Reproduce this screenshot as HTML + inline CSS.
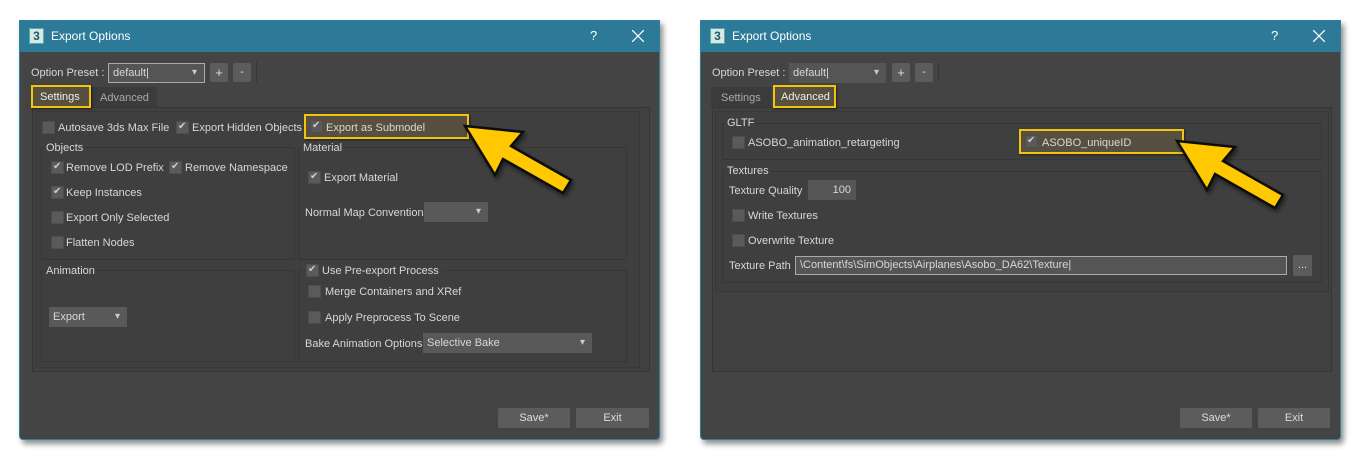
<!DOCTYPE html>
<html><head><meta charset="utf-8"><style>
*{box-sizing:border-box;margin:0;padding:0}
body{width:1362px;height:460px;background:#fff;position:relative;overflow:hidden;font-family:"Liberation Sans",sans-serif;font-size:11px;color:#d8d8d8}
.a{position:absolute}
.win{position:absolute;top:20px;width:641px;height:420px;background:#444;border:1px solid #2f7f9f;border-radius:0 0 4px 4px;box-shadow:3px 4px 6px rgba(0,0,0,.45)}
.tb{position:absolute;left:0;top:0;right:0;height:31px;background:#2c7a98;color:#fff;font-size:12px}
.ic{position:absolute;left:9px;top:7px;width:15px;height:16px;background:#d8e8e4;border:1px solid #5aa;color:#1a5a6a;font-weight:bold;font-size:12px;text-align:center;line-height:14px}
.t{position:absolute;white-space:nowrap;line-height:13px}
.cb{position:absolute;width:13px;height:13px;background:#5a5a5a;border:1px solid #4d4d4d}
.cb.k::after{content:"✔";position:absolute;left:1px;top:-1px;font-size:10px;color:#ccc}
.grp{position:absolute;border:1px solid #363636;border-radius:2px}
.lbl{position:absolute;background:#3f3f3f;padding:0 2px;line-height:12px;white-space:nowrap}
.combo{position:absolute;background:#595959;height:20px;padding-left:4px;line-height:20px}
.combo::after{content:"▾";position:absolute;right:7px;top:0;font-size:10px;color:#ccc}
.btn{position:absolute;background:#5c5c5c;border-radius:2px;text-align:center;line-height:20px;color:#ddd}
.hl{position:absolute;border:2px solid #f1c40f;background:#575040;box-shadow:1px 1px 2px rgba(0,0,0,.5)}
.x{position:absolute;left:612px;top:9px}
</style></head><body>

<!-- LEFT WINDOW -->
<div class="win" style="left:19px">
 <div class="tb"><div class="ic">3</div><div class="t" style="left:31px;top:9px">Export Options</div>
 <div class="t" style="left:570px;top:8px;font-size:13px">?</div>
 <svg class="x" width="12" height="12"><path d="M0 0L12 12M12 0L0 12" stroke="#fff" stroke-width="1.3"/></svg></div>
</div>
<div class="t" style="left:31px;top:67px">Option Preset :</div>
<div class="combo" style="left:108px;top:63px;width:97px;border:1px solid #aaa;background:#555;line-height:18px">default|</div>
<div class="btn" style="left:210px;top:63px;width:18px;height:19px;line-height:19px;font-size:13px">+</div>
<div class="btn" style="left:233px;top:63px;width:18px;height:19px;line-height:19px">-</div>
<div class="a" style="left:256px;top:62px;width:1px;height:20px;background:#363636"></div>
<div class="a" style="left:91px;top:87px;width:66px;height:20px;background:#3b3b3b"></div>
<div class="t" style="left:100px;top:92px;color:#aaa">Advanced</div>
<div class="a" style="left:32px;top:107px;width:618px;height:265px;border:1px solid #363636;background:#404040"></div>
<div class="a" style="left:36px;top:111px;width:604px;height:257px;background:#3f3f3f;border:1px solid #383838"></div>
<div class="hl" style="left:31px;top:85px;width:60px;height:23px"></div>
<div class="t" style="left:40px;top:91px;color:#eee">Settings</div>

<div class="cb" style="left:42px;top:121px"></div><div class="t" style="left:58px;top:122px">Autosave 3ds Max File</div>
<div class="cb k" style="left:176px;top:121px"></div><div class="t" style="left:192px;top:122px">Export Hidden Objects</div>
<div class="hl" style="left:304px;top:114px;width:165px;height:25px"></div>
<div class="cb k" style="left:310px;top:120px"></div><div class="t" style="left:326px;top:122px">Export as Submodel</div>

<div class="grp" style="left:41px;top:147px;width:254px;height:113px"></div><div class="lbl" style="left:44px;top:142px">Objects</div>
<div class="cb k" style="left:51px;top:161px"></div><div class="t" style="left:66px;top:162px">Remove LOD Prefix</div>
<div class="cb k" style="left:169px;top:161px"></div><div class="t" style="left:185px;top:162px">Remove Namespace</div>
<div class="cb k" style="left:51px;top:186px"></div><div class="t" style="left:66px;top:187px">Keep Instances</div>
<div class="cb" style="left:51px;top:211px"></div><div class="t" style="left:66px;top:212px">Export Only Selected</div>
<div class="cb" style="left:51px;top:236px"></div><div class="t" style="left:66px;top:237px">Flatten Nodes</div>

<div class="grp" style="left:298px;top:147px;width:329px;height:113px"></div><div class="lbl" style="left:301px;top:142px">Material</div>
<div class="cb k" style="left:308px;top:171px"></div><div class="t" style="left:324px;top:172px">Export Material</div>
<div class="t" style="left:305px;top:207px">Normal Map Convention</div>
<div class="combo" style="left:424px;top:202px;width:64px"></div>

<div class="grp" style="left:41px;top:270px;width:254px;height:92px"></div><div class="lbl" style="left:44px;top:265px">Animation</div>
<div class="combo" style="left:49px;top:307px;width:78px">Export</div>

<div class="grp" style="left:298px;top:270px;width:329px;height:92px"></div>
<div class="lbl" style="left:303px;top:265px;width:140px;height:13px"></div>
<div class="cb k" style="left:306px;top:264px"></div><div class="t" style="left:322px;top:265px">Use Pre-export Process</div>
<div class="cb" style="left:308px;top:285px"></div><div class="t" style="left:325px;top:286px">Merge Containers and XRef</div>
<div class="cb" style="left:308px;top:311px"></div><div class="t" style="left:325px;top:312px">Apply Preprocess To Scene</div>
<div class="t" style="left:305px;top:338px">Bake Animation Options</div>
<div class="combo" style="left:423px;top:333px;width:169px">Selective Bake</div>

<div class="btn" style="left:498px;top:408px;width:72px;height:20px">Save*</div>
<div class="btn" style="left:576px;top:408px;width:73px;height:20px">Exit</div>

<!-- RIGHT WINDOW -->
<div class="win" style="left:700px">
 <div class="tb"><div class="ic">3</div><div class="t" style="left:31px;top:9px">Export Options</div>
 <div class="t" style="left:570px;top:8px;font-size:13px">?</div>
 <svg class="x" width="12" height="12"><path d="M0 0L12 12M12 0L0 12" stroke="#fff" stroke-width="1.3"/></svg></div>
</div>
<div class="t" style="left:712px;top:67px">Option Preset :</div>
<div class="combo" style="left:789px;top:63px;width:97px;background:#555;line-height:20px">default|</div>
<div class="btn" style="left:892px;top:63px;width:18px;height:19px;line-height:19px;font-size:13px">+</div>
<div class="btn" style="left:915px;top:63px;width:18px;height:19px;line-height:19px">-</div>
<div class="a" style="left:938px;top:62px;width:1px;height:20px;background:#363636"></div>
<div class="a" style="left:711px;top:87px;width:60px;height:20px;background:#3b3b3b"></div>
<div class="t" style="left:721px;top:92px;color:#aaa">Settings</div>
<div class="a" style="left:712px;top:107px;width:620px;height:265px;border:1px solid #363636;background:#404040"></div>
<div class="a" style="left:715px;top:111px;width:614px;height:181px;background:#3f3f3f;border:1px solid #383838"></div>
<div class="hl" style="left:773px;top:85px;width:63px;height:23px"></div>
<div class="t" style="left:781px;top:91px;color:#eee">Advanced</div>

<div class="grp" style="left:722px;top:123px;width:600px;height:37px"></div><div class="lbl" style="left:725px;top:117px">GLTF</div>
<div class="cb" style="left:732px;top:136px"></div><div class="t" style="left:748px;top:137px">ASOBO_animation_retargeting</div>
<div class="hl" style="left:1019px;top:129px;width:165px;height:25px"></div>
<div class="cb k" style="left:1025px;top:135px"></div><div class="t" style="left:1042px;top:137px">ASOBO_uniqueID</div>

<div class="grp" style="left:722px;top:171px;width:600px;height:112px"></div><div class="lbl" style="left:725px;top:165px">Textures</div>
<div class="t" style="left:729px;top:185px">Texture Quality</div>
<div class="a" style="left:808px;top:180px;width:48px;height:20px;background:#555;text-align:right;padding-right:5px;line-height:20px">100</div>
<div class="cb" style="left:732px;top:209px"></div><div class="t" style="left:748px;top:210px">Write Textures</div>
<div class="cb" style="left:732px;top:234px"></div><div class="t" style="left:748px;top:235px">Overwrite Texture</div>
<div class="t" style="left:729px;top:260px">Texture Path</div>
<div class="a" style="left:795px;top:256px;width:492px;height:19px;background:#555;border:1px solid #aaa;padding-left:4px;line-height:17px;white-space:nowrap">\Content\fs\SimObjects\Airplanes\Asobo_DA62\Texture|</div>
<div class="btn" style="left:1293px;top:255px;width:19px;height:21px">...</div>

<div class="btn" style="left:1180px;top:408px;width:72px;height:20px">Save*</div>
<div class="btn" style="left:1258px;top:408px;width:72px;height:20px">Exit</div>

<!-- ARROWS -->
<svg class="a" style="left:0;top:0" width="1362" height="460">
 <defs><filter id="s" x="-20%" y="-20%" width="140%" height="140%"><feDropShadow dx="2" dy="3" stdDeviation="2" flood-opacity=".5"/></filter></defs>
 <polygon filter="url(#s)" points="465,126 523,132 511,146 571,180 563,193 503,159 495,175" fill="#ffc800" stroke="#111" stroke-width="2.5" stroke-linejoin="miter"/>
 <polygon filter="url(#s)" points="1177,141 1235,147 1223,161 1283,195 1275,208 1215,174 1207,190" fill="#ffc800" stroke="#111" stroke-width="2.5" stroke-linejoin="miter"/>
</svg>
</body></html>
